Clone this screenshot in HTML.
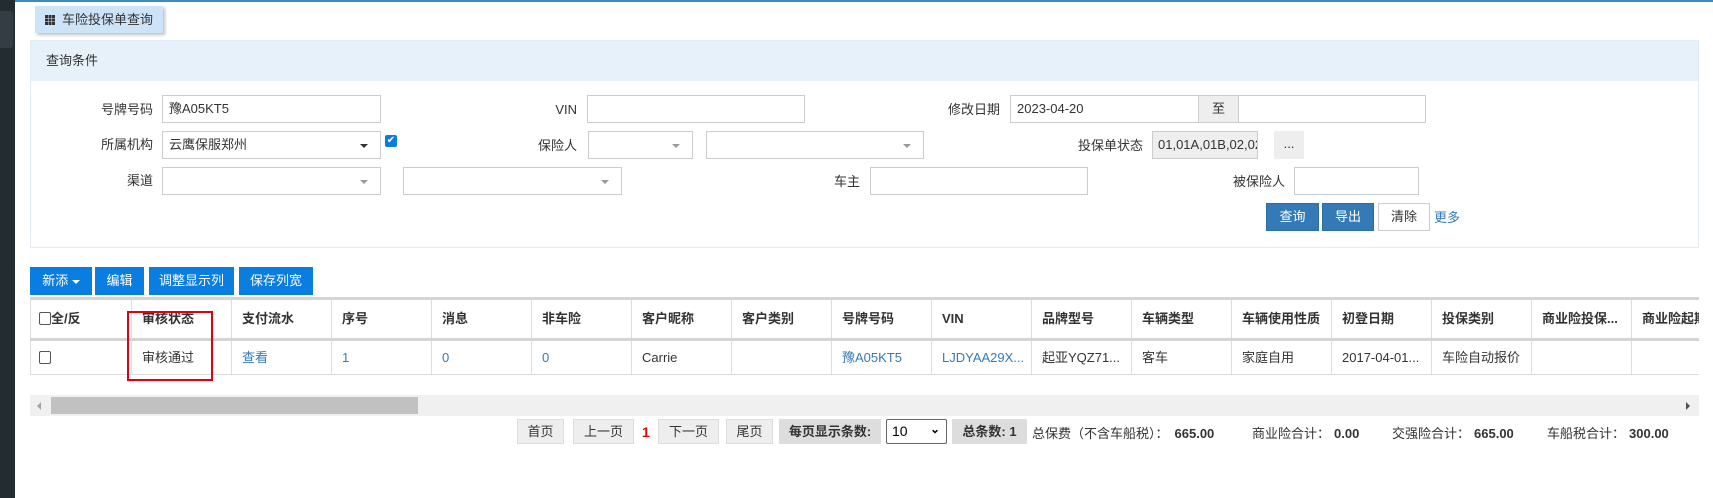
<!DOCTYPE html>
<html><head><meta charset="utf-8"><style>
*{box-sizing:border-box;margin:0;padding:0}
body{width:1713px;height:498px;position:relative;background:#fff;font-family:"Liberation Sans","Noto Sans CJK SC",sans-serif;font-size:13px;color:#333;overflow:hidden}
.a{position:absolute}
.side{left:0;top:0;width:15px;height:498px;background:#232c31}
.top{left:15px;top:0;width:1698px;height:2px;background:#3c8dbc}
.tab{left:35px;top:6px;width:128px;height:27px;background:#cde3f8;box-shadow:2px 2px 3px rgba(0,0,0,.25);line-height:27px;padding-left:27px;font-size:13px;color:#333}
.grid{left:10px;top:9px;width:10px;height:10px;background:
linear-gradient(90deg,#333 3px,transparent 3px 3.5px,#333 3.5px 6.5px,transparent 6.5px 7px,#333 7px)}
.gridh{left:10px;top:9px;width:10px;height:10px;background:linear-gradient(180deg,transparent 3px,#cde3f8 3px 3.5px,transparent 3.5px 6.5px,#cde3f8 6.5px 7px,transparent 7px)}
.panel{left:30px;top:40px;width:1669px;height:208px;border:1px solid #e3ecf6;background:#fff}
.ph{left:0;top:0;width:1667px;height:40px;background:#e7f1fa;line-height:40px;padding-left:15px}
.lbl{text-align:right;line-height:27px;height:27px}
.in{border:1px solid #ccc;height:28px;background:#fff;line-height:26px;padding-left:6px}
.car{position:absolute;right:12px;top:12px;border-left:4px solid transparent;border-right:4px solid transparent;border-top:4px solid #333}
.car.g{border-top-color:#999}
.btn{height:28px;line-height:26px;text-align:center;color:#fff;background:#337ab7;border:1px solid #2e6da4}
.tb{height:28px;line-height:28px;text-align:center;color:#fff;background:#0a7de0;top:267px}
.th,.td{position:absolute;height:100%;border-right:1px solid #ddd;padding-left:10px;white-space:nowrap;overflow:hidden}
.th{font-weight:bold;line-height:38px}
.td{line-height:34px}
.lk{color:#337ab7}
.pg{top:419px;height:25px;line-height:23px;background:#eee;border:1px solid #ddd;text-align:center}
.b{font-weight:bold}
</style></head><body>
<div class="a side"></div><div class="a" style="left:0;top:11px;width:13px;height:37px;background:#333d43;border-radius:0 3px 3px 0"></div><div class="a top"></div>
<div class="a tab"><div class="a grid"></div><div class="a gridh"></div>车险投保单查询</div>
<div class="a panel">
<div class="a ph">查询条件</div>
</div>
<div class="a lbl" style="left:60px;top:96px;width:93px">号牌号码</div>
<div class="a in" style="left:162px;top:95px;width:219px">豫A05KT5</div>
<div class="a lbl" style="left:500px;top:96px;width:77px">VIN</div>
<div class="a in" style="left:587px;top:95px;width:218px"></div>
<div class="a lbl" style="left:900px;top:96px;width:100px">修改日期</div>
<div class="a in" style="left:1010px;top:95px;width:189px">2023-04-20</div>
<div class="a in" style="left:1198px;top:95px;width:41px;background:#eee;padding:0;text-align:center">至</div>
<div class="a in" style="left:1238px;top:95px;width:188px"></div>
<div class="a lbl" style="left:60px;top:131px;width:93px">所属机构</div>
<div class="a in" style="left:162px;top:131px;width:219px">云鹰保服郑州<span class="car"></span></div>
<div class="a" style="left:385px;top:135px;width:12px;height:12px;background:#0a7de0;border-radius:2px;color:#fff;font-size:10px;line-height:12px;text-align:center">✔</div>
<div class="a lbl" style="left:500px;top:132px;width:77px">保险人</div>
<div class="a in" style="left:588px;top:131px;width:105px"><span class="car g"></span></div>
<div class="a in" style="left:706px;top:131px;width:218px"><span class="car g"></span></div>
<div class="a lbl" style="left:1040px;top:132px;width:103px">投保单状态</div>
<div class="a in" style="left:1152px;top:131px;width:106px;background:#eee;padding-left:5px;white-space:nowrap;overflow:hidden">01,01A,01B,02,02</div>
<div class="a" style="left:1274px;top:131px;width:30px;height:28px;background:#eee;text-align:center;line-height:26px">...</div>
<div class="a lbl" style="left:60px;top:167px;width:93px">渠道</div>
<div class="a in" style="left:162px;top:167px;width:219px"><span class="car g"></span></div>
<div class="a in" style="left:403px;top:167px;width:219px"><span class="car g"></span></div>
<div class="a lbl" style="left:800px;top:168px;width:60px">车主</div>
<div class="a in" style="left:870px;top:167px;width:218px"></div>
<div class="a lbl" style="left:1200px;top:168px;width:85px">被保险人</div>
<div class="a in" style="left:1294px;top:167px;width:125px"></div>
<div class="a btn" style="left:1266px;top:203px;width:53px">查询</div>
<div class="a btn" style="left:1322px;top:203px;width:52px">导出</div>
<div class="a btn" style="left:1378px;top:203px;width:52px;background:#fff;color:#333;border-color:#ccc">清除</div>
<div class="a lk" style="left:1434px;top:207px">更多</div>
<div class="a tb" style="left:30px;width:62px">新添 <span style="display:inline-block;border-left:4px solid transparent;border-right:4px solid transparent;border-top:4px solid #fff;vertical-align:middle"></span></div>
<div class="a tb" style="left:95px;width:49px">编辑</div>
<div class="a tb" style="left:149px;width:85px">调整显示列</div>
<div class="a tb" style="left:239px;width:74px">保存列宽</div>
<div class="a" style="left:30px;top:297px;width:1669px;height:3px;background:#d4d4d4"></div>
<div class="a" style="left:30px;top:300px;width:1669px;height:38px;border-left:1px solid #ddd;overflow:hidden">
<div class="th" style="left:0;width:101px;padding-left:8px"><span style="display:inline-block;width:12px;height:13px;border:1px solid #555;border-radius:2px;vertical-align:-2px"></span>全/反</div>
<div class="th" style="left:101px;width:100px">审核状态</div>
<div class="th" style="left:201px;width:100px">支付流水</div>
<div class="th" style="left:301px;width:100px">序号</div>
<div class="th" style="left:401px;width:100px">消息</div>
<div class="th" style="left:501px;width:100px">非车险</div>
<div class="th" style="left:601px;width:100px">客户昵称</div>
<div class="th" style="left:701px;width:100px">客户类别</div>
<div class="th" style="left:801px;width:100px">号牌号码</div>
<div class="th" style="left:901px;width:100px">VIN</div>
<div class="th" style="left:1001px;width:100px">品牌型号</div>
<div class="th" style="left:1101px;width:100px">车辆类型</div>
<div class="th" style="left:1201px;width:100px">车辆使用性质</div>
<div class="th" style="left:1301px;width:100px">初登日期</div>
<div class="th" style="left:1401px;width:100px">投保类别</div>
<div class="th" style="left:1501px;width:100px">商业险投保...</div>
<div class="th" style="left:1601px;width:100px">商业险起期</div>
</div>
<div class="a" style="left:30px;top:338px;width:1669px;height:3px;background:#d4d4d4"></div>
<div class="a" style="left:30px;top:341px;width:1669px;height:34px;border-left:1px solid #ddd;border-bottom:1px solid #ddd;overflow:hidden">
<div class="td" style="left:0;width:101px;padding-left:8px"><span style="display:inline-block;width:12px;height:13px;border:1px solid #555;border-radius:2px;vertical-align:-2px"></span></div>
<div class="td" style="left:101px;width:100px">审核通过</div>
<div class="td lk" style="left:201px;width:100px">查看</div>
<div class="td lk" style="left:301px;width:100px">1</div>
<div class="td lk" style="left:401px;width:100px">0</div>
<div class="td lk" style="left:501px;width:100px">0</div>
<div class="td" style="left:601px;width:100px">Carrie</div>
<div class="td" style="left:701px;width:100px"></div>
<div class="td lk" style="left:801px;width:100px">豫A05KT5</div>
<div class="td lk" style="left:901px;width:100px">LJDYAA29X...</div>
<div class="td" style="left:1001px;width:100px">起亚YQZ71...</div>
<div class="td" style="left:1101px;width:100px">客车</div>
<div class="td" style="left:1201px;width:100px">家庭自用</div>
<div class="td" style="left:1301px;width:100px">2017-04-01...</div>
<div class="td" style="left:1401px;width:100px">车险自动报价</div>
<div class="td" style="left:1501px;width:100px"></div>
<div class="td" style="left:1601px;width:100px"></div>
</div>
<div class="a" style="left:127px;top:311px;width:86px;height:70px;border:2px solid #e00010"></div>
<div class="a" style="left:30px;top:395px;width:1669px;height:21px;background:#f0f0f0"></div>
<div class="a" style="left:51px;top:397px;width:367px;height:17px;background:#c1c1c1"></div>
<div class="a" style="left:37px;top:402px;border-top:4px solid transparent;border-bottom:4px solid transparent;border-right:4px solid #a3a3a3"></div>
<div class="a" style="left:1686px;top:402px;border-top:4px solid transparent;border-bottom:4px solid transparent;border-left:4px solid #505050"></div>
<div class="a pg" style="left:517px;width:47px">首页</div>
<div class="a pg" style="left:573px;width:61px">上一页</div>
<div class="a" style="left:642px;top:424px;color:#e00;font-weight:bold;font-size:14px">1</div>
<div class="a pg" style="left:658px;width:61px">下一页</div>
<div class="a pg" style="left:726px;width:47px">尾页</div>
<div class="a pg b" style="left:779px;width:102px;background:#ddd;border-color:#ddd;white-space:nowrap">每页显示条数:</div>
<div class="a" style="left:886px;top:419px;width:61px;height:25px;border:1px solid #666;border-radius:2px;line-height:23px;padding-left:5px;font-size:14px;color:#000">10<span style="position:absolute;right:6px;top:-2px;font-size:12px;font-weight:bold">&#8964;</span></div>
<div class="a pg b" style="left:952px;width:75px;background:#ddd;border-color:#ddd">总条数: 1</div>
<div class="a" style="left:1032px;top:423px;white-space:nowrap">总保费（不含车船税）：<b style="margin-left:6px">665.00</b></div>
<div class="a" style="left:1252px;top:423px;white-space:nowrap">商业险合计：<b style="margin-left:4px">0.00</b></div>
<div class="a" style="left:1392px;top:423px;white-space:nowrap">交强险合计：<b style="margin-left:4px">665.00</b></div>
<div class="a" style="left:1547px;top:423px;white-space:nowrap">车船税合计：<b style="margin-left:4px">300.00</b></div>
</body></html>
